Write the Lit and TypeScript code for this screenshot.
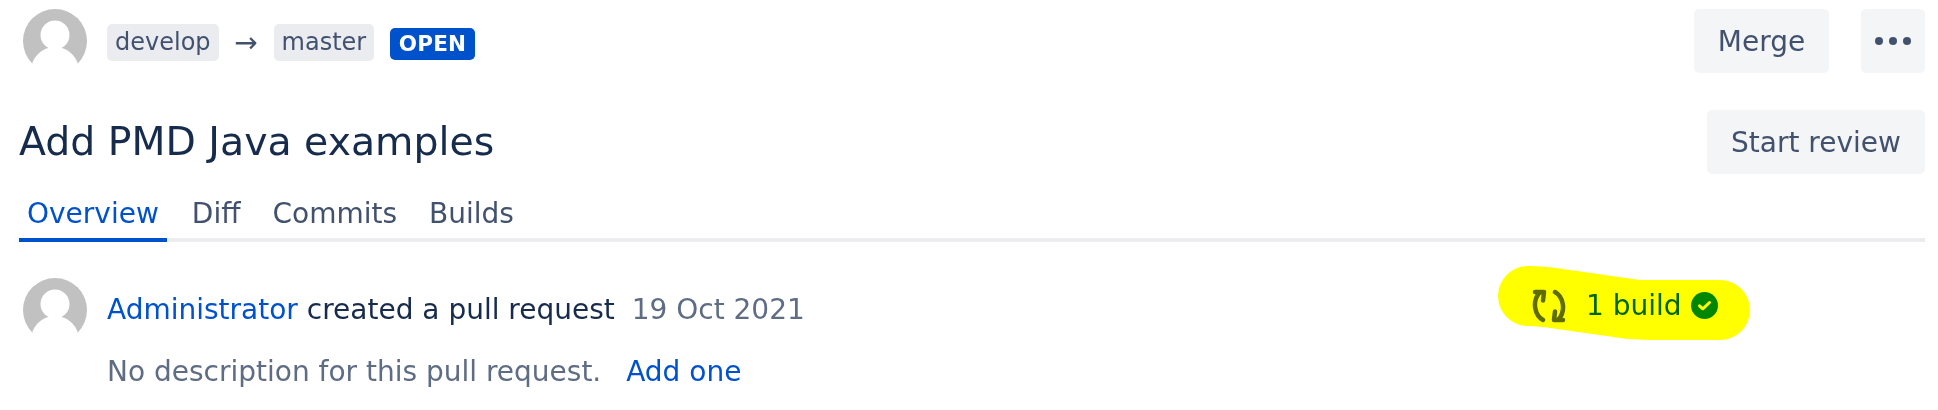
import { LitElement, html, css, svg } from "lit";
import { customElement } from "lit/decorators.js";

const avatar = html`<svg class="avatar" viewBox="0 0 64 64" aria-hidden="true">
  <circle cx="32" cy="32" r="32" fill="#c1c1c1"></circle>
  <circle cx="32" cy="26" r="14.5" fill="#fff"></circle>
  <circle cx="32" cy="62" r="24" fill="#fff"></circle>
</svg>`;

@customElement("app-root")
export class AppRoot extends LitElement {
  static styles = css`
    :host {
      display: block;
      position: relative;
      width: 1938px;
      height: 410px;
      overflow: hidden;
      background: #fff;
      font-family: "DejaVu Sans", sans-serif;
      font-size: 28px;
      color: #172b4d;
    }
    .page { padding: 9px 13px 0 19px; }
    .top { display: flex; align-items: center; height: 64px; }
    .avatar { width: 64px; height: 64px; flex: none; display: block; }
    .top .avatar { margin-left: 4px; margin-right: 20px; }
    .refs { display: flex; align-items: center; padding-top: 3px; }
    .chip {
      background: #ebecf0; color: #42526e; font-size: 24px; line-height: 37px;
      height: 37px; padding: 0 8px; border-radius: 5px;
    }
    .arrow { color: #42526e; font-size: 28px; line-height: 37px; width: 55px; text-align: center; }
    .badge {
      margin-left: 16px; margin-top: 3px; background: #0052cc; color: #fff; font-weight: 700;
      font-size: 21.5px; line-height: 32px; height: 32px; padding: 0 8.5px;
      border-radius: 5px; letter-spacing: 0.2px;
    }
    .spacer { flex: 1; }
    .btn {
      background: #f4f5f7; color: #42526e; border-radius: 5px; height: 64px;
      display: flex; align-items: center; justify-content: center;
      font-size: 28px;
    }
    .merge { width: 135px; margin-right: 32px; }
    .more { width: 64px; }
    .title-row {
      display: flex; align-items: center; justify-content: space-between;
      margin-top: 37px; height: 64px;
    }
    h1 { margin: -2px 0 0; font-size: 39.4px; font-weight: 400; color: #172b4d; }
    .review { width: 218px; }
    .tabs {
      display: flex; margin-top: 12px; height: 52px;
      border-bottom: 4px solid #ebecf0;
    }
    .tab {
      padding: 0 8px; margin-right: 16px; color: #42526e; height: 56px;
      line-height: 56px; box-sizing: border-box;
    }
    .tab.active { color: #0052cc; border-bottom: 4px solid #0052cc; margin-right: 17px; }
    .content { display: flex; margin-top: 36px; }
    .comment { flex: 1; display: flex; padding-left: 4px; }
    .comment .avatar { margin-right: 20px; }
    .line { height: 64px; line-height: 64px; white-space: nowrap; }
    .line.second { line-height: 60px; color: #5e6c84; }
    a { color: #0052cc; text-decoration: none; }
    .date { color: #5e6c84; margin-left: 8px; }
    .second a { margin-left: 16px; }
    .side { width: 393px; flex: none; }
    .build { display: flex; align-items: center; height: 55px; color: #006644; }
    .sync { width: 34px; height: 34px; margin-right: 20px; flex: none; }
    .ok { width: 27px; height: 27px; margin-left: 9px; flex: none; }
    .marker {
      position: absolute; left: 0; top: 0; width: 1938px; height: 410px;
      mix-blend-mode: multiply; pointer-events: none;
    }
  `;

  render() {
    return html`
      <div class="page">
        <div class="top">
          ${avatar}
          <div class="refs">
            <span class="chip">develop</span>
            <span class="arrow">→</span>
            <span class="chip">master</span>
            <span class="badge">OPEN</span>
          </div>
          <span class="spacer"></span>
          <div class="btn merge">Merge</div>
          <div class="btn more">
            <svg width="40" height="10" viewBox="0 0 40 10" aria-hidden="true">
              <circle cx="6" cy="5" r="4" fill="#42526e"></circle>
              <circle cx="20" cy="5" r="4" fill="#42526e"></circle>
              <circle cx="34" cy="5" r="4" fill="#42526e"></circle>
            </svg>
          </div>
        </div>
        <div class="title-row">
          <h1>Add PMD Java examples</h1>
          <div class="btn review">Start review</div>
        </div>
        <div class="tabs">
          <div class="tab active">Overview</div>
          <div class="tab">Diff</div>
          <div class="tab">Commits</div>
          <div class="tab">Builds</div>
        </div>
        <div class="content">
          <div class="comment">
            ${avatar}
            <div>
              <div class="line"><a href="#">Administrator</a> created a pull request <span class="date">19 Oct 2021</span></div>
              <div class="line second">No description for this pull request. <a href="#">Add one</a></div>
            </div>
          </div>
          <div class="side">
            <div class="build">
              <svg class="sync" viewBox="0 0 34 34" fill="none" stroke="#5e6c84" stroke-width="4.5" stroke-linecap="round" stroke-linejoin="round" aria-hidden="true">
                <g>
                  <path d="M11 31 C3 26.5 -0.5 13 7.5 3.5"></path>
                  <path d="M3 3 L12 3 L11 11.5"></path>
                </g>
                <g transform="rotate(180 17 17)">
                  <path d="M11 31 C3 26.5 -0.5 13 7.5 3.5"></path>
                  <path d="M3 3 L12 3 L11 11.5"></path>
                </g>
              </svg>
              <span>1 build</span>
              <svg class="ok" viewBox="0 0 27 27" aria-hidden="true">
                <circle cx="13.5" cy="13.5" r="13.5" fill="#00875a"></circle>
                <path d="M8.5 13.8 L11.8 16.8 L18.5 10.5" fill="none" stroke="#fff" stroke-width="3" stroke-linecap="round" stroke-linejoin="round"></path>
              </svg>
            </div>
          </div>
        </div>
      </div>
      <svg class="marker" viewBox="0 0 1938 410" aria-hidden="true">
        ${svg`<path d="M1528 296 Q1540 296 1560 299 L1630 309 Q1640 310 1650 310 L1720 310" fill="none" stroke="#ffff00" stroke-width="60" stroke-linecap="round" stroke-linejoin="round"></path>`}
      </svg>
    `;
  }
}
